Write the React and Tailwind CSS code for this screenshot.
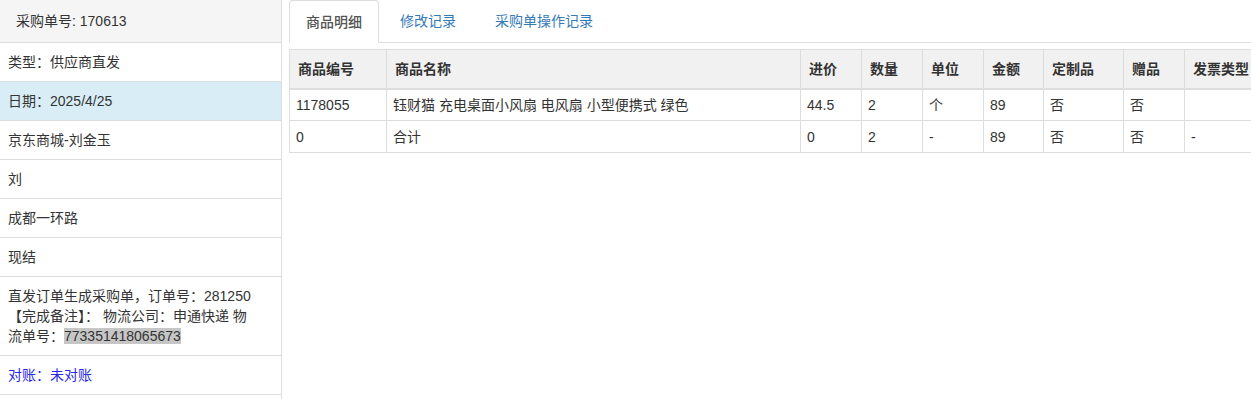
import React from 'react';

const font = { fontFamily: '"Liberation Sans", "Noto Sans CJK SC", sans-serif' };

const infoRows = [
  { text: '类型：供应商直发' },
  { text: '日期：2025/4/25', active: true },
  { text: '京东商城-刘金玉' },
  { text: '刘' },
  { text: '成都一环路' },
  { text: '现结' },
];

const columns = [
  { label: '商品编号', w: 'w-[97px]' },
  { label: '商品名称', w: 'w-[414px]' },
  { label: '进价', w: 'w-[61px]' },
  { label: '数量', w: 'w-[61px]' },
  { label: '单位', w: 'w-[61px]' },
  { label: '金额', w: 'w-[60px]' },
  { label: '定制品', w: 'w-[80px]' },
  { label: '赠品', w: 'w-[61px]' },
  { label: '发票类型', w: 'w-[90px]' },
];

const rows = [
  ['1178055', '钰财猫 充电桌面小风扇 电风扇 小型便携式 绿色', '44.5', '2', '个', '89', '否', '否', ''],
  ['0', '合计', '0', '2', '-', '89', '否', '否', '-'],
];

const App = () => {
  return (
    <div className="w-[1251px] h-[399px] overflow-hidden bg-white text-[14px] leading-[20px] text-[#333]" style={font}>
      <div className="flex h-full">
        {/* left info list */}
        <div className="w-[282px] shrink-0 border-r border-[#ddd] flex flex-col">
          <div className="h-[43px] flex items-center pl-4 bg-[#f5f5f5] border-b border-[#ddd]">采购单号: 170613</div>
          {infoRows.map((r, i) => (
            <div key={i} className={`h-[39px] flex items-center px-2 border-b border-[#ddd] ${r.active ? 'bg-[#d9edf7]' : ''}`}>
              {r.text}
            </div>
          ))}
          <div className="h-[79px] flex items-center pl-2 pr-[22px] border-b border-[#ddd]">
            <p>
              直发订单生成采购单，订单号：281250【完成备注】： 物流公司：申通快递 物流单号：<span className="bg-[#c6c6c6]">773351418065673</span>
            </p>
          </div>
          <div className="h-[39px] flex items-center px-2 border-b border-[#ddd] text-[#2a2ae6]">对账：未对账</div>
        </div>

        {/* right tabs + table */}
        <div className="flex-1 min-w-0 pl-[7px]">
          <div className="flex h-[43px] border-b border-[#ddd]">
            <div className="h-[43px] px-4 flex items-center border border-[#ddd] border-b-white rounded-t-[4px] bg-white text-[#555] font-medium">商品明细</div>
            <div className="ml-[3px] px-[18px] flex items-center text-[#337ab7]">修改记录</div>
            <div className="ml-[3px] px-[18px] flex items-center text-[#337ab7]">采购单操作记录</div>
          </div>
          <table className="mt-[6px] border-collapse table-fixed w-[985px]">
            <thead>
              <tr className="h-[39px] bg-[#f1f1f1]">
                {columns.map((c) => (
                  <th key={c.label} className={`${c.w} border border-[#ddd] border-b-2 px-2 text-left font-bold whitespace-nowrap`}>{c.label}</th>
                ))}
              </tr>
            </thead>
            <tbody>
              {rows.map((r, i) => (
                <tr key={i} className="h-[32px]">
                  {r.map((cell, j) => (
                    <td key={j} className="border border-[#ddd] px-[6px] whitespace-nowrap">{cell}</td>
                  ))}
                </tr>
              ))}
            </tbody>
          </table>
        </div>
      </div>
    </div>
  );
};

export default App;
